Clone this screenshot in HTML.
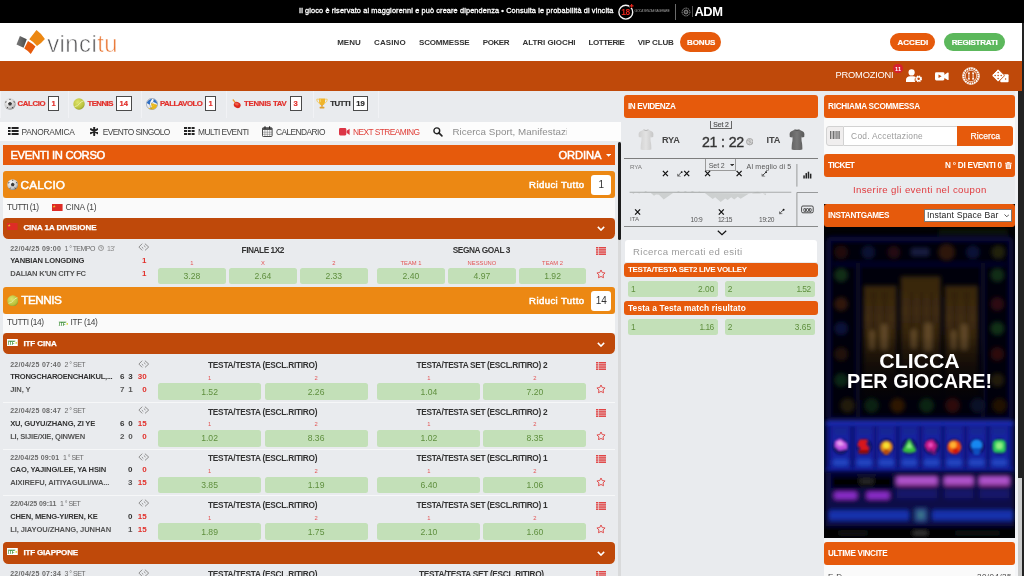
<!DOCTYPE html>
<html lang="it"><head>
<meta charset="utf-8">
<title>vincitu - Scommesse Live</title>
<style>
*{box-sizing:border-box;margin:0;padding:0}
html,body{width:1024px;height:576px;overflow:hidden;background:#e9ebee}
body{font-family:"Liberation Sans",sans-serif;position:relative;color:#333}
#pg{position:absolute;left:0;top:0;width:1024px;height:576px;overflow:hidden;background:#e9ebee;will-change:transform}
.a{position:absolute}
.t{position:absolute;white-space:nowrap;line-height:1.15}
.b{font-weight:bold}
.w{color:#fff}
.hdr{position:absolute;background:#e65a0c;border-radius:3px}
.sp{position:absolute;left:3px;width:612px;height:27px;background:#ec8813;border-radius:3px 3px 3px 3px}
.lg{position:absolute;left:3px;width:612px;background:#bf490a;border-radius:0 0 5px 5px}
.od{position:absolute;background:#c3e0b8;border-radius:2px;height:17px}
.wr{position:absolute;left:3px;width:612px;background:#fafafa}
.sep{position:absolute;left:3px;width:612px;height:1px;background:#f6f7f8}
.red{color:#e2302b}
#tabs .t.b{-webkit-text-stroke:.2px currentColor}
.gr{color:#5f8f3e}
.dk{color:#333}
</style>
</head>
<body>
<div id="pg">

<!-- ===== top black bar ===== -->
<div class="a" id="topbar" style="left:0;top:0;width:1024px;height:23px;background:#000">
<span class="t w" style="left: 299px; font-size: 7.3px; -webkit-text-stroke: 0.3px rgb(255, 255, 255); letter-spacing: 0.14px; top: 7.3px;">Il gioco è riservato ai maggiorenni e può creare dipendenza • Consulta le probabilità di vincita</span>
<svg class="a" style="left:617px;top:2.500px" width="20" height="19" viewBox="0 0 20 19"><circle cx="8.800" cy="9.200" r="6.900" fill="none" stroke="#f4f4f4" stroke-width="1.400"></circle><path d="M12.400 2.800h4.400M14.600 .6v4.400" stroke="#000" stroke-width="3.200"></path><path d="M12.700 2.800h3.800M14.600 .9v3.800" stroke="#e2231a" stroke-width="1.200"></path><text x="8.600" y="12.300" font-family="Liberation Sans, sans-serif" font-weight="bold" font-size="8.400" fill="#e2231a" text-anchor="middle" letter-spacing="-.3">18</text></svg>
<span class="t" style="left: 634.5px; font-size: 3px; color: rgb(154, 154, 154); letter-spacing: -0.22px; top: 10px;">GIOCA SENZA ESAGERARE</span>
<div class="a" style="left:675.4px;top:3.7px;width:.8px;height:16px;background:#6a6a6a"></div>
<svg class="a" style="left:681px;top:7px" width="10" height="10" viewBox="0 0 10 10"><circle cx="5" cy="5" r="3.9" fill="none" stroke="#aaa" stroke-width=".9" stroke-dasharray="1.2 .6"></circle><circle cx="5" cy="5" r="1.9" fill="none" stroke="#bbb" stroke-width=".8"></circle><circle cx="5" cy="5" r=".7" fill="#999"></circle></svg>
<div class="a" style="left:691.8px;top:6px;width:.6px;height:11px;background:#555"></div>
<span class="t b w" style="left: 694.5px; font-size: 12.9px; letter-spacing: -0.45px; top: 5.1px;">ADM</span>
</div>

<!-- ===== white header ===== -->
<div class="a" id="head" style="left:0;top:23px;width:1021.5px;height:38px;background:#fff">
<svg class="a" style="left:15px;top:6px" width="32" height="27" viewBox="15 29 32 27">
<defs><linearGradient id="lgg" x1="0" x2="1"><stop offset="0" stop-color="#7a7a7a"></stop><stop offset="1" stop-color="#4a4a4a"></stop></linearGradient></defs>
<polygon points="16.5,44.6 19.9,36.1 26.75,39.25 23.6,47.75" fill="url(#lgg)"></polygon>
<path d="M29.25 39.25L36.5 30Q41.500 33.600 44.900 39Q41.500 43.200 37 45.900Q33.500 41.800 29.250 39.250z" fill="#ec8813"></path>
<path d="M24.25 48.600L28 40.900Q32.200 43.200 35.500 46.500L30.750 54Q28 50.800 24.250 48.600z" fill="#e65a0c"></path>
</svg>
<span class="t" style="left: 47.2px; font-size: 23.8px; color: rgb(88, 88, 90); -webkit-text-stroke: 0.6px rgb(255, 255, 255); letter-spacing: 0.48px; top: 6.6px;">vinci<span style="color:#e8732f">tu</span></span>
<span class="t b dk" style="left: 337.2px; font-size: 8px; letter-spacing: -0.02px; top: 14.9px;">MENU</span>
<span class="t b dk" style="left: 374px; font-size: 8px; letter-spacing: 0.1px; top: 14.9px;">CASINO</span>
<span class="t b dk" style="left: 419px; font-size: 8px; letter-spacing: -0.17px; top: 14.9px;">SCOMMESSE</span>
<span class="t b dk" style="left: 482.7px; font-size: 8px; letter-spacing: -0.39px; top: 14.9px;">POKER</span>
<span class="t b dk" style="left: 522.5px; font-size: 8px; letter-spacing: -0.05px; top: 14.9px;">ALTRI GIOCHI</span>
<span class="t b dk" style="left: 588.5px; font-size: 8px; letter-spacing: -0.45px; top: 14.9px;">LOTTERIE</span>
<span class="t b dk" style="left: 637.7px; font-size: 8px; letter-spacing: -0.15px; top: 14.9px;">VIP CLUB</span>
<div class="a" style="left:680.3px;top:9.4px;width:41.2px;height:19.6px;border-radius:10px;background:#e65a0c"></div>
<span class="t b w" style="left: 687px; font-size: 8px; -webkit-text-stroke: 0.2px rgb(255, 255, 255); letter-spacing: -0.12px; top: 14.9px;">BONUS</span>
<div class="a" style="left:890.4px;top:10.2px;width:44.6px;height:17.6px;border-radius:9px;background:#e65a0c"></div>
<span class="t b w" style="left: 897.5px; font-size: 8px; -webkit-text-stroke: 0.2px rgb(255, 255, 255); letter-spacing: 0.02px; top: 14.6px;">ACCEDI</span>
<div class="a" style="left:944.4px;top:10.2px;width:60.6px;height:17.6px;border-radius:9px;background:#5cb85c"></div>
<span class="t b w" style="left: 951.7px; font-size: 8px; -webkit-text-stroke: 0.2px rgb(255, 255, 255); letter-spacing: -0.21px; top: 14.6px;">REGISTRATI</span>
</div>

<!-- ===== orange nav ===== -->
<div class="a" id="onav" style="left:0;top:60.5px;width:1021.5px;height:30.5px;background:#bf490a">
<span class="t w" style="left: 835.6px; font-size: 9.3px; letter-spacing: -0.21px; top: 9.9px;">PROMOZIONI</span>
<div class="a" style="left:893.4px;top:3.6px;width:9.4px;height:9.4px;border-radius:5px;background:#d7202f"></div>
<span class="t b w" style="font-size: 5.6px; top: 5.2px; left: 895.1px;">11</span>
<svg class="a" style="left:906px;top:8.6px" width="17" height="14" viewBox="0 0 17 14"><circle cx="5.6" cy="3.4" r="3.1" fill="#fff"></circle><path d="M0 13v-2.2c0-2.3 1.9-3.6 4-3.6h3.2c1 0 1.9.3 2.6.9-.9.9-1.3 2.2-1.100 3.400.1.600.3 1.100.6 1.500z" fill="#fff"></path><circle cx="12.600" cy="9.800" r="2.500" fill="none" stroke="#fff" stroke-width="1.800" stroke-dasharray="1.300 .66"></circle><circle cx="12.600" cy="9.800" r="1.900" fill="none" stroke="#fff" stroke-width="1.200"></circle></svg>
<svg class="a" style="left:935px;top:11.800px" width="14" height="9" viewBox="0 0 14 9"><rect x="0" y=".2" width="9.400" height="8.200" rx="1.300" fill="#fff"></rect><path d="M9 2.900l3.700-2.300q.9-.4.900.6v6.200q0 1-.9.600L9 5.700z" fill="#fff"></path><path d="M3.500 2.500v3.600l3.100-1.800z" fill="#bf490a"></path></svg>
<svg class="a" style="left:962px;top:6.300px" width="18" height="18" viewBox="0 0 18 18"><circle cx="9" cy="9" r="7.500" fill="none" stroke="#fff" stroke-width="1.900" stroke-dasharray="1.600 .75"></circle><circle cx="9" cy="9" r="8.400" fill="none" stroke="#fff" stroke-width=".6"></circle><circle cx="9" cy="9" r="5.700" fill="none" stroke="#fff" stroke-width=".7"></circle><path d="M5.600 5.600h2.600L6.900 8.400zM5.600 12.400h2.600L6.900 9.600zM9.800 5.600h2.600l-1.300 2.800zM9.800 12.400h2.600l-1.300-2.800z" fill="#fff"></path><circle cx="6.900" cy="9" r=".8" fill="#fff"></circle><circle cx="11.100" cy="9" r=".8" fill="#fff"></circle></svg>
<svg class="a" style="left:992px;top:8.500px" width="17" height="14" viewBox="0 0 17 14"><rect x="8.200" y="5.200" width="8.400" height="8" rx="1" fill="#fff"></rect><path d="M.4 5.600L5.300.7c.5-.5 1.200-.5 1.700 0l4.900 4.900c.5.500.5 1.200 0 1.700L7 12.200c-.5.500-1.200.500-1.700 0L.4 7.300c-.5-.5-.5-1.200 0-1.700z" fill="#fff" stroke="#bf490a" stroke-width=".9"></path><g fill="#bf490a"><circle cx="6.150" cy="3.400" r=".75"></circle><circle cx="6.150" cy="6.450" r=".75"></circle><circle cx="6.150" cy="9.500" r=".75"></circle><circle cx="3.100" cy="6.450" r=".75"></circle><circle cx="9.200" cy="6.450" r=".75"></circle><circle cx="13.600" cy="10" r=".7"></circle></g></svg>
</div>

<!-- ===== sports tabs ===== -->
<div class="a" id="tabs" style="left:0;top:91px;width:621px;height:31px;background:#e9ebee">
<div class="a" style="left:0.0px;top:0;width:1px;height:27px;background:#f1f2f5"></div><div class="a" style="left:68.0px;top:0;width:1px;height:27px;background:#f1f2f5"></div><div class="a" style="left:141.2px;top:0;width:1px;height:27px;background:#f1f2f5"></div><div class="a" style="left:226.2px;top:0;width:1px;height:27px;background:#f1f2f5"></div><div class="a" style="left:312.6px;top:0;width:1px;height:27px;background:#f1f2f5"></div><div class="a" style="left:377.6px;top:0;width:1px;height:27px;background:#f1f2f5"></div>
<svg class="a" style="left:3.5px;top:7px" width="12" height="12" viewBox="0 0 12 12"><defs><radialGradient id="sb" cx=".4" cy=".35" r=".7"><stop offset="0" stop-color="#fff"></stop><stop offset=".7" stop-color="#c8c8c8"></stop><stop offset="1" stop-color="#777"></stop></radialGradient></defs><circle cx="6" cy="6" r="5.700" fill="url(#sb)"></circle><polygon points="6,3.800 8,5.300 7.200,7.600 4.800,7.600 4,5.300" fill="#3a3a3a"></polygon><path d="M1.200 4.200l1.300-.4M10.800 4.200l-1.200-.5M3 10.300l.8-1.200M9 10.300l-.8-1.200M6 .8v1.200" stroke="#444" stroke-width="1"></path></svg>
<span class="t b red" style="left: 17.5px; font-size: 7.8px; letter-spacing: -0.35px; top: 9.1px;">CALCIO</span>
<div class="a" style="left:48px;top:5px;width:11.4px;height:14.8px;background:#fff;border:1px solid #4a4a4a"></div>
<span class="t b" style="font-size: 7.6px; color: rgb(226, 48, 43); top: 9.1px; left: 51.6px;">1</span>
<svg class="a" style="left:73.300px;top:7px" width="12" height="12" viewBox="0 0 12 12"><defs><radialGradient id="tb" cx=".4" cy=".35" r=".75"><stop offset="0" stop-color="#dfe46a"></stop><stop offset=".7" stop-color="#b9c13c"></stop><stop offset="1" stop-color="#7f8a22"></stop></radialGradient></defs><circle cx="6" cy="6" r="5.700" fill="url(#tb)"></circle><path d="M1.500 8.600Q5 8.200 6.400 5.800T10.800 2.800" fill="none" stroke="#eef2b0" stroke-width=".8"></path></svg>
<span class="t b red" style="left: 87.5px; font-size: 7.8px; letter-spacing: -0.55px; top: 9.1px;">TENNIS</span>
<div class="a" style="left:116px;top:5px;width:15.7px;height:14.8px;background:#fff;border:1px solid #4a4a4a"></div>
<span class="t b" style="font-size: 7.6px; color: rgb(226, 48, 43); top: 9.1px; left: 119.6px;">14</span>
<svg class="a" style="left:146px;top:7px" width="12" height="12" viewBox="0 0 12 12"><defs><radialGradient id="vb" cx=".4" cy=".35" r=".75"><stop offset="0" stop-color="#fff"></stop><stop offset=".8" stop-color="#e4e4e4"></stop><stop offset="1" stop-color="#aaa"></stop></radialGradient></defs><circle cx="6" cy="6" r="5.600" fill="url(#vb)" stroke="#6f7f9a" stroke-width=".5"></circle><path d="M.7 4.800Q2.600 1.300 6.200 .8 4.200 3.300 3.900 6.800 2 6.300 .7 4.800z" fill="#2f6fc4"></path><path d="M7.600 .9Q10.900 2.300 11.400 6 9.600 4.300 7.100 4 7.700 2.400 7.600 .9z" fill="#2f6fc4"></path><path d="M2.300 10.200Q5.500 10 7.500 7.500T11.200 7.200Q10.500 10.400 7 11.400 4.300 11.500 2.300 10.200z" fill="#e8b820"></path><path d="M5 5.300Q7.300 5 9.200 6.600 7 7.800 6 9.500 5 7.500 5 5.300z" fill="#e8b820"></path><path d="M3.900 6.800Q4 9 5.500 10.800M7.100 4Q6 5 5 5.300" stroke="#3a5a9a" stroke-width=".4" fill="none"></path></svg>
<span class="t b red" style="left: 159.9px; font-size: 7.8px; letter-spacing: -0.5px; top: 9.1px;">PALLAVOLO</span>
<div class="a" style="left:205px;top:5px;width:11.0px;height:14.8px;background:#fff;border:1px solid #4a4a4a"></div>
<span class="t b" style="font-size: 7.6px; color: rgb(226, 48, 43); top: 9.1px; left: 208.4px;">1</span>
<svg class="a" style="left:232px;top:8px" width="9" height="10" viewBox="0 0 9 10"><path d="M.8.500l2.600 3.200" stroke="#e89a2a" stroke-width="1.200"></path><ellipse cx="5.200" cy="6" rx="3.500" ry="3" fill="#dd2a1e" transform="rotate(20 5.200 6)"></ellipse><ellipse cx="4.600" cy="5" rx="2.200" ry="1.200" fill="#f0604a" transform="rotate(20 4.600 5)"></ellipse></svg>
<span class="t b red" style="left: 244.1px; font-size: 7.8px; letter-spacing: -0.28px; top: 9.1px;">TENNIS TAV</span>
<div class="a" style="left:289.6px;top:5px;width:12.3px;height:14.8px;background:#fff;border:1px solid #4a4a4a"></div>
<span class="t b" style="font-size: 7.6px; color: rgb(226, 48, 43); top: 9.1px; left: 293.6px;">3</span>
<svg class="a" style="left:316px;top:7.400px" width="12" height="11" viewBox="0 0 12 11"><path d="M3 .5h6v3.500c0 2-1.300 3.300-3 3.300S3 6 3 4z" fill="#f0b429"></path><path d="M3 1.200H.8c0 2.300 1 3.500 2.600 3.700M9 1.200h2.200c0 2.300-1 3.500-2.600 3.700" fill="none" stroke="#f3c95a" stroke-width=".9"></path><rect x="5.300" y="7" width="1.400" height="1.800" fill="#d9962a"></rect><rect x="3.600" y="8.700" width="4.800" height="1.800" rx=".4" fill="#e0a030"></rect><path d="M4.200 1.200v3" stroke="#fbe08a" stroke-width=".8"></path></svg>
<span class="t b dk" style="left: 330.2px; font-size: 7.8px; letter-spacing: -0.42px; top: 9.1px;">TUTTI</span>
<div class="a" style="left:353.1px;top:5px;width:14.8px;height:14.8px;background:#fff;border:1px solid #4a4a4a"></div>
<span class="t b" style="font-size: 7.6px; color: rgb(43, 43, 43); top: 9.1px; left: 356.3px;">19</span>
</div>

<!-- ===== view menu ===== -->
<div class="a" id="vmenu" style="left:0;top:121.5px;width:621px;height:19.5px;background:#fafafa">
<svg class="a" style="left:8px;top:5.500px" width="11" height="8" viewBox="0 0 11 8"><g fill="#222"><rect x="0" y="0" width="2.600" height="2"></rect><rect x="3.600" y="0" width="7" height="2"></rect><rect x="0" y="3" width="2.600" height="2"></rect><rect x="3.600" y="3" width="7" height="2"></rect><rect x="0" y="6" width="2.600" height="2"></rect><rect x="3.600" y="6" width="7" height="2"></rect></g></svg>
<span class="t" style="left: 21.5px; font-size: 8.4px; color: rgb(68, 68, 68); letter-spacing: -0.27px; top: 6.4px;">PANORAMICA</span>
<svg class="a" style="left:89.700px;top:5.700px" width="8.400" height="8.400" viewBox="0 0 9 9"><path d="M4.500 .2v8.600M.8 2.350l7.400 4.300M.8 6.650l7.400-4.300" stroke="#222" stroke-width="2.100" stroke-linecap="round"></path></svg>
<span class="t" style="left: 102.7px; font-size: 8.4px; color: rgb(68, 68, 68); letter-spacing: -0.55px; top: 6.4px;">EVENTO SINGOLO</span>
<svg class="a" style="left:183.900px;top:5.500px" width="11" height="8" viewBox="0 0 11 8"><g fill="#222"><rect x="0" y="0" width="3" height="2"></rect><rect x="3.800" y="0" width="3" height="2"></rect><rect x="7.600" y="0" width="3" height="2"></rect><rect x="0" y="3" width="3" height="2"></rect><rect x="3.800" y="3" width="3" height="2"></rect><rect x="7.600" y="3" width="3" height="2"></rect><rect x="0" y="6" width="3" height="2"></rect><rect x="3.800" y="6" width="3" height="2"></rect><rect x="7.600" y="6" width="3" height="2"></rect></g></svg>
<span class="t" style="left: 198px; font-size: 8.4px; color: rgb(68, 68, 68); letter-spacing: -0.55px; top: 6.4px;">MULTI EVENTI</span>
<svg class="a" style="left:262px;top:4.300px" width="11" height="11" viewBox="0 0 11 11"><rect x=".5" y="1.800" width="9.600" height="8.700" rx=".8" fill="#fff" stroke="#333" stroke-width=".9"></rect><rect x=".5" y="1.800" width="9.600" height="2.200" fill="#555"></rect><path d="M3 .3v2.400M7.600 .3v2.400" stroke="#222" stroke-width="1.100"></path><path d="M.6 6.200h9.400M.6 8.300h9.400M2.900 4v6.400M5.300 4v6.400M7.700 4v6.400" stroke="#666" stroke-width=".5"></path></svg>
<span class="t" style="left: 275.9px; font-size: 8.4px; color: rgb(68, 68, 68); letter-spacing: -0.55px; top: 6.4px;">CALENDARIO</span>
<svg class="a" style="left:339.400px;top:6.200px" width="11" height="8" viewBox="0 0 11 8"><rect x="0" y=".1" width="7.300" height="7.300" rx="1.300" fill="#dc3545"></rect><path d="M7.600 2.800l3-2.100v6.200l-3-2.100z" fill="#dc3545"></path></svg>
<span class="t" style="left: 352.9px; font-size: 8.4px; color: rgb(224, 64, 58); letter-spacing: -0.55px; top: 6.4px;">NEXT STREAMING</span>
<svg class="a" style="left:433px;top:5.800px" width="10" height="10" viewBox="0 0 10 10"><circle cx="3.800" cy="3.800" r="2.900" fill="none" stroke="#222" stroke-width="1.400"></circle><path d="M5.900 5.900l3 3" stroke="#222" stroke-width="1.600" stroke-linecap="round"></path></svg>
<div class="a" style="left:450px;top:0;width:171px;height:19.500px;background:#fdfdfd"></div>
<div class="a" style="left:450px;top:0;width:117px;height:19.500px;overflow:hidden"><span class="t" style="left: 2.5px; font-size: 9.8px; color: rgb(142, 142, 142); letter-spacing: 0.05px; top: 4px;">Ricerca Sport, Manifestazione</span></div>
</div>

<!-- ===== main list ===== -->
<div id="main">
<div class="hdr" style="left:3px;top:144.800px;width:611.800px;height:20px;border-radius:0"></div>
<span class="t w" style="font-size: 11.2px; left: 10.4px; -webkit-text-stroke: 0.5px rgb(255, 255, 255); letter-spacing: -0.28px; top: 148.5px;">EVENTI IN CORSO</span>
<span class="t w" style="font-size: 11.2px; left: 558.5px; -webkit-text-stroke: 0.5px rgb(255, 255, 255); letter-spacing: -0.12px; top: 148.5px;">ORDINA</span>
<svg class="a" style="left:606px;top:154.300px" width="5.200" height="2.800" viewBox="0 0 5.2 2.8"><path d="M0 0h5.200L2.600 2.800z" fill="#fff"></path></svg>
<div class="sp" style="top:171.2px;height:26.600px"></div>
<svg class="a" style="left:6.9px;top:178.79999999999998px" width="11.4" height="11.4" viewBox="0 0 12 12"><circle cx="6" cy="6" r="5.700" fill="url(#sb)"></circle><polygon points="6,3.800 8,5.300 7.200,7.600 4.800,7.600 4,5.300" fill="#3a3a3a"></polygon><path d="M1.200 4.200l1.300-.4M10.800 4.200l-1.200-.5M3 10.300l.8-1.200M9 10.300l-.8-1.200M6 .8v1.200" stroke="#444" stroke-width="1"></path></svg>
<span class="t w" style="font-size: 11.8px; left: 20.6px; -webkit-text-stroke: 0.5px rgb(255, 255, 255); letter-spacing: 0.08px; top: 178.5px;">CALCIO</span>
<span class="t w" style="font-size: 9.6px; left: 529.1px; -webkit-text-stroke: 0.5px rgb(255, 255, 255); letter-spacing: 0.39px; top: 179.3px;">Riduci Tutto</span>
<div class="a" style="left:591.200px;top:175.2px;width:20px;height:19.500px;border-radius:3px;background:#fff"></div>
<span class="t dk" style="font-size: 10px; top: 179.3px; left: 598.5px;">1</span>
<div class="wr" style="top:197.800px;height:20px"></div>
<span class="t " style="font-size: 8.4px; left: 7.1px; color: rgb(68, 68, 68); letter-spacing: -0.55px; top: 202.8px;">TUTTI (1)</span>
<svg class="a" style="left:52.2px;top:204.1px" width="10.6" height="7.2" viewBox="0 0 10.6 7.2"><rect width="10.6" height="7.2" fill="#de2c26"></rect><polygon points="2.2,.9 2.600,2 3.700,2 2.800,2.700 3.150,3.800 2.200,3.100 1.250,3.800 1.600,2.700 .7,2 1.800,2" fill="#f2c230"></polygon></svg>
<span class="t " style="font-size: 8.4px; left: 65.6px; color: rgb(68, 68, 68); letter-spacing: -0.16px; top: 202.8px;">CINA (1)</span>
<div class="lg" style="top:217.7px;height:21.2px;border-radius:3.500px 4px 5.500px 5.500px"></div>
<svg class="a" style="left:7.1px;top:223.3px" width="10.6" height="7.2" viewBox="0 0 10.6 7.2"><rect width="10.6" height="7.2" fill="#de2c26"></rect><polygon points="2.2,.9 2.600,2 3.700,2 2.800,2.700 3.150,3.800 2.200,3.100 1.250,3.800 1.600,2.700 .7,2 1.800,2" fill="#f2c230"></polygon></svg>
<span class="t b w" style="font-size: 8px; left: 23.4px; -webkit-text-stroke: 0.25px rgb(255, 255, 255); letter-spacing: -0.06px; top: 223.3px;">CINA 1A DIVISIONE</span>
<svg class="a" style="left:596.600px;top:226.2px" width="8" height="5.200" viewBox="0 0 8 5.2"><path d="M.8 .9l3.200 3.200L7.200 .9" fill="none" stroke="#fff" stroke-width="1.500"></path></svg>
<span class="t " style="font-size: 7px; left: 10.2px; color: rgb(106, 106, 106); font-weight: 600; letter-spacing: 0.28px; top: 244.5px;">22/04/25 09:00</span>
<span class="t " style="font-size: 7px; left: 64.4px; color: rgb(106, 106, 106); letter-spacing: -0.55px; top: 244.5px;">1 ° TEMPO</span>
<svg class="a" style="left:98px;top:245.400px" width="6" height="6" viewBox="0 0 6 6"><circle cx="3" cy="3" r="2.500" fill="none" stroke="#777" stroke-width=".7"></circle><path d="M3 1.400v1.700h1.200" fill="none" stroke="#777" stroke-width=".6"></path></svg>
<span class="t " style="font-size: 7px; left: 106.9px; color: rgb(138, 138, 138); letter-spacing: -0.55px; top: 244.5px;">13'</span>
<svg class="a" style="left:138px;top:243.4px" width="11.500" height="8" viewBox="138 243.400 11.500 8"><path d="M142.200 244.100L138.900 247.450l3.300 3.350M144.900 244.100l3.800 3.350-3.700 3.350M141.800 247.500l1.500 1.400M143.900 246l1.600 1.400" fill="none" stroke="#8e8e8e" stroke-width="1"></path></svg>
<span class="t b" style="font-size: 7.6px; left: 10.2px; color: rgb(51, 51, 51); letter-spacing: -0.18px; top: 257.1px;">YANBIAN LONGDING</span>
<span class="t b" style="font-size: 7.6px; left: 10.2px; color: rgb(85, 85, 85); letter-spacing: -0.26px; top: 269.6px;">DALIAN K'UN CITY FC</span>
<span class="t b red" style="font-size: 8px; top: 256px; left: 142.1px;">1</span>
<span class="t b red" style="font-size: 8px; top: 269.2px; left: 142.1px;">1</span>
<span class="t b dk" style="font-size: 8.3px; letter-spacing: -0.47px; top: 245.7px; left: 241.6px;">FINALE 1X2</span>
<span class="t b dk" style="font-size: 8.3px; letter-spacing: -0.41px; top: 245.7px; left: 452.7px;">SEGNA GOAL 3</span>
<div class="od" style="left:158.1px;top:267.6px;width:67.6px;height:16.600px;border-radius:2.500px"></div>
<span class="t gr" style="font-size: 8.6px; top: 271.8px; left: 183.5px;">3.28</span>
<span class="t " style="font-size: 5.8px; color: rgb(227, 84, 84); top: 259.5px; left: 190.3px;">1</span>
<div class="od" style="left:229.1px;top:267.6px;width:67.6px;height:16.600px;border-radius:2.500px"></div>
<span class="t gr" style="font-size: 8.6px; top: 271.8px; left: 254.5px;">2.64</span>
<span class="t " style="font-size: 5.8px; color: rgb(227, 84, 84); top: 259.5px; left: 261px;">X</span>
<div class="od" style="left:300px;top:267.6px;width:67.6px;height:16.600px;border-radius:2.500px"></div>
<span class="t gr" style="font-size: 8.6px; top: 271.8px; left: 325.4px;">2.33</span>
<span class="t " style="font-size: 5.8px; color: rgb(227, 84, 84); top: 259.5px; left: 332.2px;">2</span>
<div class="od" style="left:377.2px;top:267.6px;width:67.6px;height:16.600px;border-radius:2.500px"></div>
<span class="t gr" style="font-size: 8.6px; top: 271.8px; left: 402.6px;">2.40</span>
<span class="t " style="font-size: 5.8px; color: rgb(227, 84, 84); top: 259.5px; left: 400.5px;">TEAM 1</span>
<div class="od" style="left:448.1px;top:267.6px;width:67.6px;height:16.600px;border-radius:2.500px"></div>
<span class="t gr" style="font-size: 8.6px; top: 271.8px; left: 473.5px;">4.97</span>
<span class="t " style="font-size: 5.8px; color: rgb(227, 84, 84); top: 259.5px; left: 467.6px;">NESSUNO</span>
<div class="od" style="left:518.8px;top:267.6px;width:67.6px;height:16.600px;border-radius:2.500px"></div>
<span class="t gr" style="font-size: 8.6px; top: 271.8px; left: 544.2px;">1.92</span>
<span class="t " style="font-size: 5.8px; color: rgb(227, 84, 84); top: 259.5px; left: 542.1px;">TEAM 2</span>
<svg class="a" style="left:596px;top:247px" width="10" height="8" viewBox="0 0 10 8"><g fill="#e04545"><rect x="0" y="0" width="2" height="1.500"></rect><rect x="2.600" y="0" width="7.400" height="1.500"></rect><rect x="0" y="2.150" width="2" height="1.500"></rect><rect x="2.600" y="2.150" width="7.400" height="1.500"></rect><rect x="0" y="4.300" width="2" height="1.500"></rect><rect x="2.600" y="4.300" width="7.400" height="1.500"></rect><rect x="0" y="6.450" width="2" height="1.500"></rect><rect x="2.600" y="6.450" width="7.400" height="1.500"></rect></g></svg>
<svg class="a" style="left:596px;top:269px" width="10" height="9.600" viewBox="0 0 9.2 8.8"><path d="M4.600 .9l1.150 2.350 2.600.38-1.880 1.830.44 2.590L4.600 6.830 2.290 8.050l.44-2.590L.85 3.630l2.600-.38z" fill="none" stroke="#e04545" stroke-width=".85" stroke-linejoin="round"></path></svg>
<div class="sp" style="top:287.1px;height:26.600px"></div>
<svg class="a" style="left:6.9px;top:294.70000000000005px" width="11.6" height="11.6" viewBox="0 0 12 12"><circle cx="6" cy="6" r="5.700" fill="url(#tb)"></circle><path d="M1.500 8.600Q5 8.200 6.400 5.800T10.800 2.800" fill="none" stroke="#eef2b0" stroke-width=".8"></path></svg>
<span class="t w" style="font-size: 11.8px; left: 21.3px; -webkit-text-stroke: 0.5px rgb(255, 255, 255); letter-spacing: -0.55px; top: 294.4px;">TENNIS</span>
<span class="t w" style="font-size: 9.6px; left: 529.1px; -webkit-text-stroke: 0.5px rgb(255, 255, 255); letter-spacing: 0.39px; top: 295.2px;">Riduci Tutto</span>
<div class="a" style="left:591.200px;top:291.1px;width:20px;height:19.500px;border-radius:3px;background:#fff"></div>
<span class="t dk" style="font-size: 10px; top: 295.3px; left: 595.7px;">14</span>
<div class="wr" style="top:313.700px;height:19.500px"></div>
<span class="t " style="font-size: 8.4px; left: 7.1px; color: rgb(68, 68, 68); letter-spacing: -0.44px; top: 318px;">TUTTI (14)</span>
<svg class="a" style="left:57.7px;top:319.6px" width="10.8" height="7.400" viewBox="0 0 10.8 7.4"><rect width="10.8" height="7.400" fill="#fafafa"></rect><rect x=".8" y="1.500" width="7.600" height="1" fill="#8fbf8a"></rect><text x=".7" y="6.300" font-family="Liberation Sans, sans-serif" font-weight="bold" font-style="italic" font-size="4.600" fill="#3f8f3a">ITF</text><circle cx="9.300" cy="3.900" r=".9" fill="#d8d838"></circle></svg>
<span class="t " style="font-size: 8.4px; left: 70.6px; color: rgb(68, 68, 68); letter-spacing: -0.37px; top: 318px;">ITF (14)</span>
<div class="lg" style="top:333.1px;height:21.2px;border-radius:3.500px 4px 5.500px 5.500px"></div>
<svg class="a" style="left:7.1px;top:338.6px" width="10.8" height="7.400" viewBox="0 0 10.8 7.4"><rect width="10.8" height="7.400" fill="#fff"></rect><rect x=".8" y="1.500" width="7.600" height="1" fill="#8fbf8a"></rect><text x=".7" y="6.300" font-family="Liberation Sans, sans-serif" font-weight="bold" font-style="italic" font-size="4.600" fill="#3f8f3a">ITF</text><circle cx="9.300" cy="3.900" r=".9" fill="#d8d838"></circle></svg>
<span class="t b w" style="font-size: 8px; left: 23.4px; -webkit-text-stroke: 0.25px rgb(255, 255, 255); letter-spacing: -0.07px; top: 338.7px;">ITF CINA</span>
<svg class="a" style="left:596.600px;top:341.6px" width="8" height="5.200" viewBox="0 0 8 5.2"><path d="M.8 .9l3.200 3.200L7.200 .9" fill="none" stroke="#fff" stroke-width="1.500"></path></svg>
<span class="t " style="font-size: 7px; left: 10.2px; color: rgb(106, 106, 106); font-weight: 600; letter-spacing: 0.28px; top: 360.5px;">22/04/25 07:40</span>
<span class="t " style="font-size: 7px; left: 64.4px; color: rgb(106, 106, 106); letter-spacing: -0.49px; top: 360.5px;">2 ° SET</span>
<svg class="a" style="left:138px;top:359.5px" width="11.500" height="8" viewBox="138 243.400 11.500 8"><path d="M142.200 244.100L138.900 247.450l3.300 3.350M144.900 244.100l3.800 3.350-3.700 3.350M141.800 247.500l1.500 1.400M143.900 246l1.600 1.400" fill="none" stroke="#8e8e8e" stroke-width="1"></path></svg>
<span class="t b dk" style="font-size: 8.3px; letter-spacing: -0.25px; top: 360.9px; left: 208px;">TESTA/TESTA (ESCL.RITIRO)</span>
<span class="t b dk" style="font-size: 8.3px; letter-spacing: -0.33px; top: 360.9px; left: 416.5px;">TESTA/TESTA SET (ESCL.RITIRO) 2</span>
<svg class="a" style="left:596px;top:361.9px" width="10" height="8" viewBox="0 0 10 8"><g fill="#e04545"><rect x="0" y="0" width="2" height="1.500"></rect><rect x="2.600" y="0" width="7.400" height="1.500"></rect><rect x="0" y="2.150" width="2" height="1.500"></rect><rect x="2.600" y="2.150" width="7.400" height="1.500"></rect><rect x="0" y="4.300" width="2" height="1.500"></rect><rect x="2.600" y="4.300" width="7.400" height="1.500"></rect><rect x="0" y="6.450" width="2" height="1.500"></rect><rect x="2.600" y="6.450" width="7.400" height="1.500"></rect></g></svg>
<span class="t b" style="font-size: 7.6px; left: 10.2px; color: rgb(51, 51, 51); letter-spacing: -0.27px; top: 373.1px;">TRONGCHAROENCHAIKUL,...</span>
<span class="t b" style="font-size: 7.6px; left: 10.2px; color: rgb(85, 85, 85); letter-spacing: -0.11px; top: 386px;">JIN, Y</span>
<span class="t b" style="font-size: 8px; color: rgb(51, 51, 51); word-spacing: 1.5px; top: 372px; left: 120px;">6 3</span>
<span class="t b" style="font-size: 8px; color: rgb(85, 85, 85); word-spacing: 1.5px; top: 385.1px; left: 120px;">7 1</span>
<span class="t b red" style="font-size: 8px; top: 372px; left: 137.8px;">30</span>
<span class="t b red" style="font-size: 8px; top: 385.1px; left: 142.2px;">0</span>
<div class="od" style="left:158px;top:383.4px;width:103.1px;height:16.600px;border-radius:2.500px"></div>
<span class="t gr" style="font-size: 8.6px; top: 387.6px; left: 201.2px;">1.52</span>
<span class="t " style="font-size: 5.8px; color: rgb(227, 84, 84); top: 374.6px; left: 207.9px;">1</span>
<div class="od" style="left:264.5px;top:383.4px;width:103.1px;height:16.600px;border-radius:2.500px"></div>
<span class="t gr" style="font-size: 8.6px; top: 387.6px; left: 307.7px;">2.26</span>
<span class="t " style="font-size: 5.8px; color: rgb(227, 84, 84); top: 374.6px; left: 314.4px;">2</span>
<div class="od" style="left:377.3px;top:383.4px;width:103.1px;height:16.600px;border-radius:2.500px"></div>
<span class="t gr" style="font-size: 8.6px; top: 387.6px; left: 420.5px;">1.04</span>
<span class="t " style="font-size: 5.8px; color: rgb(227, 84, 84); top: 374.6px; left: 427.2px;">1</span>
<div class="od" style="left:483.3px;top:383.4px;width:103.1px;height:16.600px;border-radius:2.500px"></div>
<span class="t gr" style="font-size: 8.6px; top: 387.6px; left: 526.5px;">7.20</span>
<span class="t " style="font-size: 5.8px; color: rgb(227, 84, 84); top: 374.6px; left: 533.2px;">2</span>
<svg class="a" style="left:596px;top:384.1px" width="10" height="9.600" viewBox="0 0 9.2 8.8"><path d="M4.600 .9l1.150 2.350 2.600.38-1.880 1.830.44 2.590L4.600 6.830 2.290 8.050l.44-2.590L.85 3.630l2.600-.38z" fill="none" stroke="#e04545" stroke-width=".85" stroke-linejoin="round"></path></svg>
<div class="sep" style="top:401.9px"></div>
<span class="t " style="font-size: 7px; left: 10.2px; color: rgb(106, 106, 106); font-weight: 600; letter-spacing: 0.28px; top: 407.1px;">22/04/25 08:47</span>
<span class="t " style="font-size: 7px; left: 64.4px; color: rgb(106, 106, 106); letter-spacing: -0.49px; top: 407.1px;">2 ° SET</span>
<svg class="a" style="left:138px;top:406.13px" width="11.500" height="8" viewBox="138 243.400 11.500 8"><path d="M142.200 244.100L138.900 247.450l3.300 3.350M144.900 244.100l3.800 3.350-3.700 3.350M141.800 247.500l1.500 1.400M143.900 246l1.600 1.400" fill="none" stroke="#8e8e8e" stroke-width="1"></path></svg>
<span class="t b dk" style="font-size: 8.3px; letter-spacing: -0.25px; top: 407.6px; left: 208px;">TESTA/TESTA (ESCL.RITIRO)</span>
<span class="t b dk" style="font-size: 8.3px; letter-spacing: -0.33px; top: 407.6px; left: 416.5px;">TESTA/TESTA SET (ESCL.RITIRO) 2</span>
<svg class="a" style="left:596px;top:408.53px" width="10" height="8" viewBox="0 0 10 8"><g fill="#e04545"><rect x="0" y="0" width="2" height="1.500"></rect><rect x="2.600" y="0" width="7.400" height="1.500"></rect><rect x="0" y="2.150" width="2" height="1.500"></rect><rect x="2.600" y="2.150" width="7.400" height="1.500"></rect><rect x="0" y="4.300" width="2" height="1.500"></rect><rect x="2.600" y="4.300" width="7.400" height="1.500"></rect><rect x="0" y="6.450" width="2" height="1.500"></rect><rect x="2.600" y="6.450" width="7.400" height="1.500"></rect></g></svg>
<span class="t b" style="font-size: 7.6px; left: 10.2px; color: rgb(51, 51, 51); letter-spacing: -0.19px; top: 419.8px;">XU, GUYU/ZHANG, ZI YE</span>
<span class="t b" style="font-size: 7.6px; left: 10.2px; color: rgb(85, 85, 85); letter-spacing: -0.22px; top: 432.7px;">LI, SIJIE/XIE, QINWEN</span>
<span class="t b" style="font-size: 8px; color: rgb(51, 51, 51); word-spacing: 1.5px; top: 418.6px; left: 120px;">6 0</span>
<span class="t b" style="font-size: 8px; color: rgb(85, 85, 85); word-spacing: 1.5px; top: 431.7px; left: 120px;">2 0</span>
<span class="t b red" style="font-size: 8px; top: 418.6px; left: 137.8px;">15</span>
<span class="t b red" style="font-size: 8px; top: 431.7px; left: 142.2px;">0</span>
<div class="od" style="left:158px;top:430.03px;width:103.1px;height:16.600px;border-radius:2.500px"></div>
<span class="t gr" style="font-size: 8.6px; top: 434.2px; left: 201.2px;">1.02</span>
<span class="t " style="font-size: 5.8px; color: rgb(227, 84, 84); top: 421.2px; left: 207.9px;">1</span>
<div class="od" style="left:264.5px;top:430.03px;width:103.1px;height:16.600px;border-radius:2.500px"></div>
<span class="t gr" style="font-size: 8.6px; top: 434.2px; left: 307.7px;">8.36</span>
<span class="t " style="font-size: 5.8px; color: rgb(227, 84, 84); top: 421.2px; left: 314.4px;">2</span>
<div class="od" style="left:377.3px;top:430.03px;width:103.1px;height:16.600px;border-radius:2.500px"></div>
<span class="t gr" style="font-size: 8.6px; top: 434.2px; left: 420.5px;">1.02</span>
<span class="t " style="font-size: 5.8px; color: rgb(227, 84, 84); top: 421.2px; left: 427.2px;">1</span>
<div class="od" style="left:483.3px;top:430.03px;width:103.1px;height:16.600px;border-radius:2.500px"></div>
<span class="t gr" style="font-size: 8.6px; top: 434.2px; left: 526.5px;">8.35</span>
<span class="t " style="font-size: 5.8px; color: rgb(227, 84, 84); top: 421.2px; left: 533.2px;">2</span>
<svg class="a" style="left:596px;top:430.73px" width="10" height="9.600" viewBox="0 0 9.2 8.8"><path d="M4.600 .9l1.150 2.350 2.600.38-1.880 1.830.44 2.590L4.600 6.830 2.290 8.050l.44-2.590L.85 3.630l2.600-.38z" fill="none" stroke="#e04545" stroke-width=".85" stroke-linejoin="round"></path></svg>
<div class="sep" style="top:448.5px"></div>
<span class="t " style="font-size: 7px; left: 10.2px; color: rgb(106, 106, 106); font-weight: 600; letter-spacing: 0.15px; top: 453.7px;">22/04/25 09:01</span>
<span class="t " style="font-size: 7px; left: 63px; color: rgb(106, 106, 106); letter-spacing: -0.55px; top: 453.7px;">1 ° SET</span>
<svg class="a" style="left:138px;top:452.76px" width="11.500" height="8" viewBox="138 243.400 11.500 8"><path d="M142.200 244.100L138.900 247.450l3.300 3.350M144.900 244.100l3.800 3.350-3.700 3.350M141.800 247.500l1.500 1.400M143.900 246l1.600 1.400" fill="none" stroke="#8e8e8e" stroke-width="1"></path></svg>
<span class="t b dk" style="font-size: 8.3px; letter-spacing: -0.25px; top: 454.2px; left: 208px;">TESTA/TESTA (ESCL.RITIRO)</span>
<span class="t b dk" style="font-size: 8.3px; letter-spacing: -0.33px; top: 454.2px; left: 416.5px;">TESTA/TESTA SET (ESCL.RITIRO) 1</span>
<svg class="a" style="left:596px;top:455.15999999999997px" width="10" height="8" viewBox="0 0 10 8"><g fill="#e04545"><rect x="0" y="0" width="2" height="1.500"></rect><rect x="2.600" y="0" width="7.400" height="1.500"></rect><rect x="0" y="2.150" width="2" height="1.500"></rect><rect x="2.600" y="2.150" width="7.400" height="1.500"></rect><rect x="0" y="4.300" width="2" height="1.500"></rect><rect x="2.600" y="4.300" width="7.400" height="1.500"></rect><rect x="0" y="6.450" width="2" height="1.500"></rect><rect x="2.600" y="6.450" width="7.400" height="1.500"></rect></g></svg>
<span class="t b" style="font-size: 7.6px; left: 10.2px; color: rgb(51, 51, 51); letter-spacing: -0.14px; top: 466.4px;">CAO, YAJING/LEE, YA HSIN</span>
<span class="t b" style="font-size: 7.6px; left: 10.2px; color: rgb(85, 85, 85); letter-spacing: -0.13px; top: 479.3px;">AIXIREFU, AITIYAGULI/WA...</span>
<span class="t b" style="font-size: 8px; color: rgb(51, 51, 51); word-spacing: 1.5px; top: 465.3px; left: 128.1px;">0</span>
<span class="t b" style="font-size: 8px; color: rgb(85, 85, 85); word-spacing: 1.5px; top: 478.4px; left: 128.1px;">3</span>
<span class="t b red" style="font-size: 8px; top: 465.3px; left: 142.2px;">0</span>
<span class="t b red" style="font-size: 8px; top: 478.4px; left: 137.8px;">15</span>
<div class="od" style="left:158px;top:476.65999999999997px;width:103.1px;height:16.600px;border-radius:2.500px"></div>
<span class="t gr" style="font-size: 8.6px; top: 480.8px; left: 201.2px;">3.85</span>
<span class="t " style="font-size: 5.8px; color: rgb(227, 84, 84); top: 467.8px; left: 207.9px;">1</span>
<div class="od" style="left:264.5px;top:476.65999999999997px;width:103.1px;height:16.600px;border-radius:2.500px"></div>
<span class="t gr" style="font-size: 8.6px; top: 480.8px; left: 307.7px;">1.19</span>
<span class="t " style="font-size: 5.8px; color: rgb(227, 84, 84); top: 467.8px; left: 314.4px;">2</span>
<div class="od" style="left:377.3px;top:476.65999999999997px;width:103.1px;height:16.600px;border-radius:2.500px"></div>
<span class="t gr" style="font-size: 8.6px; top: 480.8px; left: 420.5px;">6.40</span>
<span class="t " style="font-size: 5.8px; color: rgb(227, 84, 84); top: 467.8px; left: 427.2px;">1</span>
<div class="od" style="left:483.3px;top:476.65999999999997px;width:103.1px;height:16.600px;border-radius:2.500px"></div>
<span class="t gr" style="font-size: 8.6px; top: 480.8px; left: 526.5px;">1.06</span>
<span class="t " style="font-size: 5.8px; color: rgb(227, 84, 84); top: 467.8px; left: 533.2px;">2</span>
<svg class="a" style="left:596px;top:477.36px" width="10" height="9.600" viewBox="0 0 9.2 8.8"><path d="M4.600 .9l1.150 2.350 2.600.38-1.880 1.830.44 2.590L4.600 6.830 2.290 8.050l.44-2.590L.85 3.630l2.600-.38z" fill="none" stroke="#e04545" stroke-width=".85" stroke-linejoin="round"></path></svg>
<div class="sep" style="top:495.2px"></div>
<span class="t " style="font-size: 7px; left: 10.2px; color: rgb(106, 106, 106); font-weight: 600; letter-spacing: -0.04px; top: 500.4px;">22/04/25 09:11</span>
<span class="t " style="font-size: 7px; left: 60px; color: rgb(106, 106, 106); letter-spacing: -0.55px; top: 500.4px;">1 ° SET</span>
<svg class="a" style="left:138px;top:499.39px" width="11.500" height="8" viewBox="138 243.400 11.500 8"><path d="M142.200 244.100L138.900 247.450l3.300 3.350M144.900 244.100l3.800 3.350-3.700 3.350M141.800 247.500l1.500 1.400M143.900 246l1.600 1.400" fill="none" stroke="#8e8e8e" stroke-width="1"></path></svg>
<span class="t b dk" style="font-size: 8.3px; letter-spacing: -0.25px; top: 500.8px; left: 208px;">TESTA/TESTA (ESCL.RITIRO)</span>
<span class="t b dk" style="font-size: 8.3px; letter-spacing: -0.33px; top: 500.8px; left: 416.5px;">TESTA/TESTA SET (ESCL.RITIRO) 1</span>
<svg class="a" style="left:596px;top:501.78999999999996px" width="10" height="8" viewBox="0 0 10 8"><g fill="#e04545"><rect x="0" y="0" width="2" height="1.500"></rect><rect x="2.600" y="0" width="7.400" height="1.500"></rect><rect x="0" y="2.150" width="2" height="1.500"></rect><rect x="2.600" y="2.150" width="7.400" height="1.500"></rect><rect x="0" y="4.300" width="2" height="1.500"></rect><rect x="2.600" y="4.300" width="7.400" height="1.500"></rect><rect x="0" y="6.450" width="2" height="1.500"></rect><rect x="2.600" y="6.450" width="7.400" height="1.500"></rect></g></svg>
<span class="t b" style="font-size: 7.6px; left: 10.2px; color: rgb(51, 51, 51); letter-spacing: -0.17px; top: 513px;">CHEN, MENG-YI/REN, KE</span>
<span class="t b" style="font-size: 7.6px; left: 10.2px; color: rgb(85, 85, 85); letter-spacing: -0.11px; top: 525.9px;">LI, JIAYOU/ZHANG, JUNHAN</span>
<span class="t b" style="font-size: 8px; color: rgb(51, 51, 51); word-spacing: 1.5px; top: 511.9px; left: 128.1px;">0</span>
<span class="t b" style="font-size: 8px; color: rgb(85, 85, 85); word-spacing: 1.5px; top: 525px; left: 128.1px;">1</span>
<span class="t b red" style="font-size: 8px; top: 511.9px; left: 137.8px;">15</span>
<span class="t b red" style="font-size: 8px; top: 525px; left: 137.8px;">15</span>
<div class="od" style="left:158px;top:523.29px;width:103.1px;height:16.600px;border-radius:2.500px"></div>
<span class="t gr" style="font-size: 8.6px; top: 527.5px; left: 201.2px;">1.89</span>
<span class="t " style="font-size: 5.8px; color: rgb(227, 84, 84); top: 514.5px; left: 207.9px;">1</span>
<div class="od" style="left:264.5px;top:523.29px;width:103.1px;height:16.600px;border-radius:2.500px"></div>
<span class="t gr" style="font-size: 8.6px; top: 527.5px; left: 307.7px;">1.75</span>
<span class="t " style="font-size: 5.8px; color: rgb(227, 84, 84); top: 514.5px; left: 314.4px;">2</span>
<div class="od" style="left:377.3px;top:523.29px;width:103.1px;height:16.600px;border-radius:2.500px"></div>
<span class="t gr" style="font-size: 8.6px; top: 527.5px; left: 420.5px;">2.10</span>
<span class="t " style="font-size: 5.8px; color: rgb(227, 84, 84); top: 514.5px; left: 427.2px;">1</span>
<div class="od" style="left:483.3px;top:523.29px;width:103.1px;height:16.600px;border-radius:2.500px"></div>
<span class="t gr" style="font-size: 8.6px; top: 527.5px; left: 526.5px;">1.60</span>
<span class="t " style="font-size: 5.8px; color: rgb(227, 84, 84); top: 514.5px; left: 533.2px;">2</span>
<svg class="a" style="left:596px;top:523.99px" width="10" height="9.600" viewBox="0 0 9.2 8.8"><path d="M4.600 .9l1.150 2.350 2.600.38-1.880 1.830.44 2.590L4.600 6.830 2.290 8.050l.44-2.590L.85 3.630l2.600-.38z" fill="none" stroke="#e04545" stroke-width=".85" stroke-linejoin="round"></path></svg>
<div class="sep" style="top:541.8px"></div>
<div class="lg" style="top:542.3px;height:21.4px;border-radius:3.500px 4px 5.500px 5.500px"></div>
<svg class="a" style="left:7.1px;top:547.9px" width="10.8" height="7.400" viewBox="0 0 10.8 7.4"><rect width="10.8" height="7.400" fill="#fff"></rect><rect x=".8" y="1.500" width="7.600" height="1" fill="#8fbf8a"></rect><text x=".7" y="6.300" font-family="Liberation Sans, sans-serif" font-weight="bold" font-style="italic" font-size="4.600" fill="#3f8f3a">ITF</text><circle cx="9.300" cy="3.900" r=".9" fill="#d8d838"></circle></svg>
<span class="t b w" style="font-size: 8px; left: 23.4px; -webkit-text-stroke: 0.25px rgb(255, 255, 255); letter-spacing: -0.16px; top: 547.9px;">ITF GIAPPONE</span>
<svg class="a" style="left:596.600px;top:550.8px" width="8" height="5.200" viewBox="0 0 8 5.2"><path d="M.8 .9l3.200 3.200L7.200 .9" fill="none" stroke="#fff" stroke-width="1.500"></path></svg>
<span class="t " style="font-size: 7px; left: 10.2px; color: rgb(106, 106, 106); font-weight: 600; letter-spacing: 0.28px; top: 569.9px;">22/04/25 07:34</span>
<span class="t " style="font-size: 7px; left: 64.4px; color: rgb(106, 106, 106); letter-spacing: -0.49px; top: 569.9px;">3 ° SET</span>
<svg class="a" style="left:138px;top:568.9px" width="11.500" height="8" viewBox="138 243.400 11.500 8"><path d="M142.200 244.100L138.900 247.450l3.300 3.350M144.900 244.100l3.800 3.350-3.700 3.350M141.800 247.500l1.500 1.400M143.900 246l1.600 1.400" fill="none" stroke="#8e8e8e" stroke-width="1"></path></svg>
<span class="t b dk" style="font-size: 8.3px; letter-spacing: -0.25px; top: 570.3px; left: 208px;">TESTA/TESTA (ESCL.RITIRO)</span>
<span class="t b dk" style="font-size: 8.3px; letter-spacing: -0.32px; top: 570.3px; left: 419.1px;">TESTA/TESTA SET (ESCL.RITIRO)</span>
<svg class="a" style="left:596px;top:571.3px" width="10" height="8" viewBox="0 0 10 8"><g fill="#e04545"><rect x="0" y="0" width="2" height="1.500"></rect><rect x="2.600" y="0" width="7.400" height="1.500"></rect><rect x="0" y="2.150" width="2" height="1.500"></rect><rect x="2.600" y="2.150" width="7.400" height="1.500"></rect><rect x="0" y="4.300" width="2" height="1.500"></rect><rect x="2.600" y="4.300" width="7.400" height="1.500"></rect><rect x="0" y="6.450" width="2" height="1.500"></rect><rect x="2.600" y="6.450" width="7.400" height="1.500"></rect></g></svg>
</div>

<!-- ===== mid scrollbar ===== -->
<div class="a" style="left:618px;top:141.5px;width:3px;height:435px;background:#d9dadb"></div>
<div class="a" style="left:618px;top:141.5px;width:3px;height:98.5px;background:#1c1c1c;border-radius:1.5px"></div>

<!-- ===== centre panel ===== -->
<div id="mid">
<div class="hdr" style="left:624.300px;top:94.500px;width:193.700px;height:23.200px"></div>
<span class="t b w" style="left: 628px; font-size: 8.2px; letter-spacing: -0.4px; top: 101.9px;">IN EVIDENZA</span>
<!-- scoreboard -->
<div class="a" style="left:710.200px;top:120.500px;width:21.800px;height:8.800px;border:1px solid #666;border-top:0"></div>
<span class="t" style="font-size: 6.8px; color: rgb(85, 85, 85); -webkit-text-stroke: 0.2px rgb(85, 85, 85); letter-spacing: -0.09px; top: 120.9px; left: 713.3px;">Set 2</span>
<svg class="a" style="left:637.500px;top:128.800px" width="16" height="21.500" viewBox="0 0 16 21.500"><defs><linearGradient id="sh1" x1="0" x2="1"><stop offset="0" stop-color="#cfcfcf"></stop><stop offset=".5" stop-color="#e2e2e2"></stop><stop offset="1" stop-color="#c6c6c6"></stop></linearGradient><linearGradient id="sh2" x1="0" x2="1"><stop offset="0" stop-color="#5e5e5e"></stop><stop offset=".5" stop-color="#777"></stop><stop offset="1" stop-color="#585858"></stop></linearGradient></defs><path id="shp" d="M5.500 .8Q8 0 10.500 .8L14 2.400Q15.300 3.200 15.400 5L15.200 8 12.800 8.600 12.600 7.200Q12.200 11 13 14 13.500 17.500 13.300 20.600 8 21.800 2.700 20.600 2.500 17.500 3 14 3.800 11 3.400 7.200L3.200 8.600 .8 8 .6 5Q.7 3.200 2 2.400z" fill="url(#sh1)"></path><path d="M5.600 .7Q8 2.800 10.400 .7" fill="none" stroke="#aaa" stroke-width=".7"></path></svg>
<span class="t" style="left: 661.9px; font-size: 9.2px; color: rgb(68, 68, 68); font-weight: 600; letter-spacing: -0.07px; top: 134.6px;">RYA</span>
<span class="t" style="left: 702px; font-size: 14.2px; color: rgb(51, 51, 51); -webkit-text-stroke: 0.35px rgb(51, 51, 51); word-spacing: 0.5px; letter-spacing: -0.37px; top: 134.1px;">21 : 22</span>
<svg class="a" style="left:746px;top:138.400px" width="7.400" height="7.400" viewBox="0 0 8 8"><circle cx="4" cy="4" r="3.500" fill="#d5d5d5" stroke="#9a9a9a" stroke-width=".8"></circle><path d="M1 2.800Q3.600 2.500 4.500 4.500T7.400 5M3 .8Q4.800 2 4.500 4.500M4.500 4.500Q3 6 3.300 7.400" fill="none" stroke="#9a9a9a" stroke-width=".6"></path></svg>
<span class="t" style="left: 766.5px; font-size: 9.2px; color: rgb(68, 68, 68); font-weight: 600; letter-spacing: -0.11px; top: 134.6px;">ITA</span>
<svg class="a" style="left:788.700px;top:128.800px" width="16" height="21.500" viewBox="0 0 16 21.500"><path d="M5.500 .8Q8 0 10.500 .8L14 2.400Q15.300 3.200 15.400 5L15.200 8 12.800 8.600 12.600 7.200Q12.200 11 13 14 13.500 17.500 13.300 20.600 8 21.800 2.700 20.600 2.500 17.500 3 14 3.800 11 3.400 7.200L3.200 8.600 .8 8 .6 5Q.7 3.200 2 2.400z" fill="url(#sh2)"></path><path d="M5.600 .7Q8 2.800 10.400 .7" fill="none" stroke="#4a4a4a" stroke-width=".7"></path></svg>
<div class="a" style="left:624.300px;top:158px;width:193.700px;height:1px;background:#7d7d7d"></div>
<!-- momentum chart -->
<span class="t" style="left: 629.9px; font-size: 6.2px; color: rgb(119, 119, 119); letter-spacing: -0.05px; top: 163.4px;">RYA</span>
<div class="a" style="left:705.200px;top:158.500px;width:31.300px;height:12.600px;border:1px solid #9a9a9a;border-top:0;background:#e9ebee"></div>
<span class="t" style="left: 708.8px; font-size: 7px; color: rgb(85, 85, 85); letter-spacing: -0.11px; top: 161.6px;">Set 2</span>
<svg class="a" style="left:729.900px;top:164px" width="4.200" height="2.400" viewBox="0 0 4.200 2.400"><path d="M0 0h4.200L2.100 2.400z" fill="#333"></path></svg>
<span class="t" style="left: 746.6px; font-size: 7px; color: rgb(85, 85, 85); letter-spacing: 0.2px; top: 163.1px;">Al meglio di 5</span>
<svg class="a" style="left:624px;top:160px" width="194" height="66" viewBox="624 160 194 66">
<g stroke="#111" stroke-width="1.250" fill="none"><path d="M662.9 170.9l5 5.200m0-5.200l-5 5.200"></path><path d="M684.2 170.9l5 5.200m0-5.200l-5 5.200"></path><path d="M705.1 170.9l5 5.200m0-5.200l-5 5.200"></path><path d="M736.6 170.9l5 5.200m0-5.200l-5 5.200"></path><path d="M635.1 209.4l5 5.200m0-5.200l-5 5.200"></path><path d="M718.8 209.4l5 5.200m0-5.200l-5 5.200"></path></g>
<g><circle cx="681.7" cy="172.1" r=".95" fill="#111"></circle><path d="M681.7 172.1L678.5 175.1" stroke="#222" stroke-width=".8"></path><path d="M677.1 173.5L677.3 176.6L681.1 176.5L679.1 175.3z" fill="#555" opacity=".85"></path><circle cx="766.1" cy="172.1" r=".95" fill="#111"></circle><path d="M766.1 172.1L762.9 175.1" stroke="#222" stroke-width=".8"></path><path d="M761.5 173.5L761.7 176.6L765.5 176.5L763.5 175.3z" fill="#555" opacity=".85"></path><circle cx="783.6" cy="209.7" r=".95" fill="#111"></circle><path d="M783.6 209.7L780.4 212.7" stroke="#222" stroke-width=".8"></path><path d="M779.0 211.1L779.2 214.2L783.0 214.1L781.0 212.9z" fill="#555" opacity=".85"></path></g>
<path d="M629.600 192.300l2 0 1.800 1.600 1.500-1.500 2 .2 2.300 1 1.800-1.200 3-.2 1.500-1.100 2 .9 2.500.3 4 3.400 2-1.300 3 .3 4.700 4.800 5-3.600 5-3.400 3-.3 1.500-1.200 2 1 3 .2 2-1.100 2 1 3 .1 2-1.100 2.500 1 3 .2 1.500-.9 2 .9 3 .1 4.500 3.600 4 3 2.500-1.800 5.500 4.700 4.500-3.400 2.500 1.600 3.500-2.800 3 2.300 3.500-2.800 3 2 4-2.600 4-2.400 3-.2 3.500-1.600 3-.2 2.500 1.500 2 .3 3 1.700.5-1.800z" fill="#cdd0d0"></path>
<path d="M629.600 192.200H791.300" stroke="#a9abab" stroke-width="1.100"></path>
<path d="M796.900 164v22.600M796.900 226.200V192.500H818" fill="none" stroke="#8f9191" stroke-width=".9"></path>
<g fill="#222"><rect x="803.300" y="175.400" width="1.500" height="3.100"></rect><rect x="805.500" y="173.100" width="1.500" height="5.400"></rect><rect x="807.700" y="171.700" width="1.500" height="6.800"></rect><rect x="809.900" y="173.700" width="1.500" height="4.800"></rect></g>
<rect x="801.600" y="206" width="11.600" height="6.800" rx="1.300" fill="none" stroke="#222" stroke-width=".8"></rect>
<text x="807.400" y="211.500" font-family="Liberation Sans, sans-serif" font-weight="bold" font-size="5.400" fill="#222" text-anchor="middle" letter-spacing="-.2">000</text>
</svg>
<span class="t" style="left: 629.9px; font-size: 6.2px; color: rgb(102, 102, 102); letter-spacing: 0.04px; top: 215.4px;">ITA</span>
<span class="t" style="left: 690.6px; font-size: 6.6px; color: rgb(85, 85, 85); letter-spacing: -0.29px; top: 215.9px;">10:9</span>
<span class="t" style="left: 718px; font-size: 6.6px; color: rgb(85, 85, 85); letter-spacing: -0.55px; top: 215.9px;">12:15</span>
<span class="t" style="left: 759px; font-size: 6.6px; color: rgb(85, 85, 85); letter-spacing: -0.26px; top: 215.9px;">19:20</span>
<div class="a" style="left:624.300px;top:225.800px;width:193.700px;height:1px;background:#888a8a"></div>
<svg class="a" style="left:717px;top:230.300px" width="10" height="5.500" viewBox="0 0 10 5.500"><path d="M.8 .7l4.200 3.900L9.200 .7" fill="none" stroke="#111" stroke-width="1.200"></path></svg>
<!-- market search -->
<div class="a" style="left:624.800px;top:240.300px;width:192.700px;height:22.200px;border-radius:3px 3px 0 0;background:#fff"></div>
<span class="t" style="left: 633px; font-size: 9.6px; color: rgb(155, 155, 155); letter-spacing: 0.41px; top: 245.8px;">Ricerca mercati ed esiti</span>
<div class="hdr" style="left:624.300px;top:262.700px;width:193.700px;height:14.200px"></div>
<span class="t b w" style="left: 628px; font-size: 8px; letter-spacing: -0.39px; top: 265.4px;">TESTA/TESTA SET2 LIVE VOLLEY</span>
<div class="od" style="left:628px;top:281px;width:89.800px;height:15.900px;border-radius:2.500px"></div>
<div class="od" style="left:724.800px;top:281px;width:90px;height:15.900px;border-radius:2.500px"></div>
<span class="t gr" style="left: 631px; font-size: 8.4px; top: 284.8px;">1</span>
<span class="t gr" style="font-size: 8.4px; letter-spacing: 0px; top: 285.2px; left: 698px;">2.00</span>
<span class="t gr" style="left: 727.8px; font-size: 8.4px; top: 284.8px;">2</span>
<span class="t gr" style="font-size: 8.4px; letter-spacing: -0.55px; top: 285.2px; left: 796.4px;">1.52</span>
<div class="hdr" style="left:624.300px;top:300.500px;width:193.700px;height:14.800px"></div>
<span class="t b w" style="left: 628px; font-size: 8.4px; letter-spacing: 0.13px; top: 303.9px;">Testa a Testa match risultato</span>
<div class="od" style="left:628px;top:318.800px;width:89.800px;height:15.900px;border-radius:2.500px"></div>
<div class="od" style="left:724.800px;top:318.800px;width:90px;height:15.900px;border-radius:2.500px"></div>
<span class="t gr" style="left: 631px; font-size: 8.4px; top: 322.6px;">1</span>
<span class="t gr" style="font-size: 8.4px; letter-spacing: -0.55px; top: 323px; left: 699.6px;">1.16</span>
<span class="t gr" style="left: 727.8px; font-size: 8.4px; top: 322.6px;">2</span>
<span class="t gr" style="font-size: 8.4px; letter-spacing: 0.02px; top: 323px; left: 794.7px;">3.65</span>

</div>

<!-- ===== right panel ===== -->
<div id="right">
<div class="a" style="left:824px;top:117.700px;width:194px;height:36.200px;background:#fafafa"></div>
<div class="a" style="left:1015.200px;top:91px;width:2.800px;height:485px;background:#f1f2f5"></div>
<div class="hdr" style="left:824.400px;top:94.500px;width:190.600px;height:23.200px"></div>
<span class="t b w" style="left: 828px; font-size: 8.2px; letter-spacing: -0.26px; top: 101.9px;">RICHIAMA SCOMMESSA</span>
<div class="a" style="left:826.300px;top:126.200px;width:17.700px;height:19.400px;background:#f0eeee;border:1px solid #d2d2d2;border-radius:3px 0 0 3px"></div>
<svg class="a" style="left:830px;top:131px" width="10" height="8" viewBox="0 0 10 8"><g fill="#6f6f6f"><rect x="0" y="0" width="1.100" height="8"></rect><rect x="1.700" y="0" width=".6" height="8"></rect><rect x="2.900" y="0" width="1.200" height="8"></rect><rect x="4.600" y="0" width=".6" height="8"></rect><rect x="5.600" y="0" width="1.100" height="8"></rect><rect x="7.200" y="0" width=".6" height="8"></rect><rect x="8.200" y="0" width=".6" height="8"></rect><rect x="9.200" y="0" width=".8" height="8"></rect></g></svg>
<div class="a" style="left:844px;top:126.200px;width:113.300px;height:19.400px;background:#fff;border-top:1px solid #d2d2d2;border-bottom:1px solid #d2d2d2"></div>
<span class="t" style="left: 851.1px; font-size: 8.4px; color: rgb(155, 155, 155); letter-spacing: 0.26px; top: 132px;">Cod. Accettazione</span>
<div class="a" style="left:957.200px;top:126px;width:56px;height:19.600px;background:#e65a0c;border-radius:0 3px 3px 0"></div>
<span class="t w" style="left: 970.6px; font-size: 8.6px; -webkit-text-stroke: 0.25px rgb(255, 255, 255); letter-spacing: 0.07px; top: 131.8px;">Ricerca</span>
<div class="hdr" style="left:824.400px;top:153.900px;width:190.600px;height:23.100px"></div>
<span class="t b w" style="left: 828px; font-size: 8.2px; letter-spacing: -0.55px; top: 161.4px;">TICKET</span>
<span class="t b w" style="left: 945px; font-size: 8.2px; letter-spacing: -0.25px; top: 161.4px;">N ° DI EVENTI 0</span>
<svg class="a" style="left:1005px;top:161.500px" width="6.800" height="7.400" viewBox="0 0 6.800 7.400"><path d="M2.300 0h2.200l.4.700h1.900v1H0v-1h1.900zM.5 2.200h5.800l-.4 4.600c0 .3-.3.600-.6.600H1.500c-.3 0-.6-.3-.6-.6z" fill="#fff"></path><path d="M2.300 3v3.400M3.400 3v3.400M4.500 3v3.400" stroke="#e65a0c" stroke-width=".45"></path></svg>
<span class="t" style="left: 852.9px; font-size: 9.6px; color: rgb(224, 58, 62); letter-spacing: 0.39px; top: 184.3px;">Inserire gli eventi nel coupon</span>
<div class="a" style="left:824.400px;top:204px;width:190.600px;height:334px;background:#000"></div>
<svg class="a" style="left:824.400px;top:227px" width="190.600" height="311" viewBox="824.400 227 190.600 311"><defs><filter id="bl" x="-5%" y="-5%" width="110%" height="110%"><feGaussianBlur stdDeviation="1.300"></feGaussianBlur></filter><filter id="bl15" x="-10%" y="-10%" width="120%" height="120%"><feGaussianBlur stdDeviation="1.900"></feGaussianBlur></filter><filter id="bl2" x="-20%" y="-20%" width="140%" height="140%"><feGaussianBlur stdDeviation="2.200"></feGaussianBlur></filter><linearGradient id="reel" x1="0" y1="0" x2="0" y2="1"><stop offset="0" stop-color="#46300e"></stop><stop offset=".3" stop-color="#523814"></stop><stop offset=".65" stop-color="#33220b"></stop><stop offset="1" stop-color="#150e05"></stop></linearGradient><linearGradient id="fade" x1="0" y1="0" x2="0" y2="1"><stop offset="0" stop-color="#000" stop-opacity="0"></stop><stop offset="1" stop-color="#04030a" stop-opacity=".95"></stop></linearGradient></defs><rect x="824.400" y="227" width="190.600" height="311" fill="#020205"></rect><g opacity=".78"><g filter="url(#bl15)"><rect x="939" y="230.300" width="69" height="3" fill="#1c2a10"></rect><rect x="828.800" y="238.600" width="182.600" height="181" rx="3" fill="#06050c" stroke="#090948" stroke-width="4.600"></rect><rect x="834" y="262.500" width="172" height="3.500" fill="#07073a"></rect><rect x="856" y="264" width="5" height="152" fill="#07072e"></rect><rect x="981" y="264" width="5" height="152" fill="#07072e"></rect></g><g filter="url(#bl2)"><circle cx="841.5" cy="252.300" r="7" fill="#2a0c0a"></circle><circle cx="868.8" cy="252.300" r="7" fill="#0a1440"></circle><circle cx="894.2" cy="252.300" r="6.5" fill="#2e0c14"></circle><circle cx="947" cy="252.300" r="8.5" fill="#3a1c08"></circle><circle cx="973.3" cy="252.300" r="7" fill="#0a1444"></circle><circle cx="998.7" cy="252.300" r="7" fill="#2c2a0c"></circle><rect x="911" y="247.500" width="19" height="9" rx="2" fill="#1a2050"></rect><circle cx="841.500" cy="275" r="7" fill="#143a1c"></circle><circle cx="997.700" cy="275" r="7" fill="#143a1c"></circle><circle cx="841.500" cy="304" r="7" fill="#3c1c0a"></circle><circle cx="997.700" cy="304" r="7" fill="#3a0c16"></circle><circle cx="841.500" cy="328.5" r="7" fill="#0c1646"></circle><circle cx="997.700" cy="328.5" r="7" fill="#123c1c"></circle><circle cx="841.500" cy="354" r="7" fill="#2a1408"></circle><circle cx="997.700" cy="354" r="7" fill="#3a0c10"></circle><circle cx="841.500" cy="380" r="7" fill="#10301a"></circle><circle cx="997.700" cy="380" r="7" fill="#2a2408"></circle></g><g filter="url(#bl15)"><rect x="901" y="276.300" width="40" height="120" fill="url(#reel)"></rect><rect x="864" y="285.500" width="33" height="111" fill="url(#reel)"></rect><rect x="945" y="285.500" width="33.200" height="111" fill="url(#reel)"></rect><rect x="873" y="292" width="2.200" height="40" fill="#2e1d08" opacity=".7"></rect><rect x="884" y="292" width="2.200" height="40" fill="#2e1d08" opacity=".7"></rect><rect x="911" y="292" width="2.200" height="40" fill="#2e1d08" opacity=".7"></rect><rect x="921" y="292" width="2.200" height="40" fill="#2e1d08" opacity=".7"></rect><rect x="931" y="292" width="2.200" height="40" fill="#2e1d08" opacity=".7"></rect><rect x="954" y="292" width="2.200" height="40" fill="#2e1d08" opacity=".7"></rect><rect x="966" y="292" width="2.200" height="40" fill="#2e1d08" opacity=".7"></rect><rect x="881" y="324" width="7" height="26" rx="2.500" fill="#7a5c30"></rect><rect x="870" y="330" width="5" height="20" rx="2.500" fill="#7a5c30"></rect><rect x="924.5" y="323" width="8" height="28" rx="2.500" fill="#7a5c30"></rect><rect x="911.5" y="329" width="5.5" height="20" rx="2.500" fill="#7a5c30"></rect><rect x="961" y="324" width="7" height="26" rx="2.500" fill="#7a5c30"></rect><rect x="951.5" y="330" width="5" height="20" rx="2.500" fill="#7a5c30"></rect></g><rect x="860" y="336" width="124" height="64" fill="url(#fade)"></rect><g filter="url(#bl2)"><circle cx="848" cy="405.500" r="7.500" fill="#2a2408"></circle><circle cx="872" cy="405.500" r="7.500" fill="#0e2a12"></circle><circle cx="898" cy="405.500" r="7.500" fill="#3a1c06"></circle><circle cx="927" cy="405.500" r="7.500" fill="#0e2e14"></circle><circle cx="953" cy="405.500" r="7.500" fill="#3a100c"></circle><circle cx="978" cy="405.500" r="7.500" fill="#0c1230"></circle><circle cx="1000" cy="405.500" r="7.500" fill="#2a1206"></circle></g></g><g filter="url(#bl15)"><rect x="826" y="420.500" width="188.500" height="52" fill="#0e1580"></rect><rect x="826" y="421" width="188.500" height="3.200" fill="#2434cc"></rect><rect x="826" y="468.500" width="188.500" height="3" fill="#1622a8"></rect><rect x="831.5" y="427" width="19" height="40" fill="#1420a0"></rect><rect x="834" y="429.500" width="14" height="4" rx="1" fill="#182a8c"></rect><rect x="833.5" y="459.500" width="15" height="6" rx="1.500" fill="#2448c4"></rect><rect x="855.2" y="427" width="19" height="40" fill="#1420a0"></rect><rect x="857.7" y="429.500" width="14" height="4" rx="1" fill="#182a8c"></rect><rect x="857.2" y="459.500" width="15" height="6" rx="1.500" fill="#2448c4"></rect><rect x="877.2" y="427" width="19" height="40" fill="#1420a0"></rect><rect x="879.7" y="429.500" width="14" height="4" rx="1" fill="#182a8c"></rect><rect x="879.2" y="459.500" width="15" height="6" rx="1.500" fill="#2448c4"></rect><rect x="900.2" y="427" width="19" height="40" fill="#1420a0"></rect><rect x="902.7" y="429.500" width="14" height="4" rx="1" fill="#182a8c"></rect><rect x="902.2" y="459.500" width="15" height="6" rx="1.500" fill="#2448c4"></rect><rect x="922.5" y="427" width="19" height="40" fill="#1420a0"></rect><rect x="925" y="429.500" width="14" height="4" rx="1" fill="#182a8c"></rect><rect x="924.5" y="459.500" width="15" height="6" rx="1.500" fill="#2448c4"></rect><rect x="945.2" y="427" width="19" height="40" fill="#1420a0"></rect><rect x="947.7" y="429.500" width="14" height="4" rx="1" fill="#182a8c"></rect><rect x="947.2" y="459.500" width="15" height="6" rx="1.500" fill="#2448c4"></rect><rect x="967.5" y="427" width="19" height="40" fill="#1420a0"></rect><rect x="970" y="429.500" width="14" height="4" rx="1" fill="#182a8c"></rect><rect x="969.5" y="459.500" width="15" height="6" rx="1.500" fill="#2448c4"></rect><rect x="990.2" y="427" width="19" height="40" fill="#1420a0"></rect><rect x="992.7" y="429.500" width="14" height="4" rx="1" fill="#182a8c"></rect><rect x="992.2" y="459.500" width="15" height="6" rx="1.500" fill="#2448c4"></rect><rect x="851.5" y="426" width="2.600" height="43" fill="#0a0f60"></rect><rect x="874.4000000000001" y="426" width="2.600" height="43" fill="#0a0f60"></rect><rect x="896.9000000000001" y="426" width="2.600" height="43" fill="#0a0f60"></rect><rect x="919.5" y="426" width="2.600" height="43" fill="#0a0f60"></rect><rect x="942.0" y="426" width="2.600" height="43" fill="#0a0f60"></rect><rect x="964.5" y="426" width="2.600" height="43" fill="#0a0f60"></rect><rect x="987.0" y="426" width="2.600" height="43" fill="#0a0f60"></rect></g><g filter="url(#bl)"><circle cx="841" cy="446.500" r="8" fill="#0a0c50" opacity=".7"></circle><circle cx="864.7" cy="446.500" r="8" fill="#0a0c50" opacity=".7"></circle><circle cx="886.7" cy="446.500" r="8" fill="#0a0c50" opacity=".7"></circle><circle cx="909.7" cy="446.500" r="8" fill="#0a0c50" opacity=".7"></circle><circle cx="932" cy="446.500" r="8" fill="#0a0c50" opacity=".7"></circle><circle cx="954.7" cy="446.500" r="8" fill="#0a0c50" opacity=".7"></circle><circle cx="977" cy="446.500" r="8" fill="#0a0c50" opacity=".7"></circle><circle cx="999.7" cy="446.500" r="8" fill="#0a0c50" opacity=".7"></circle><path d="M835.500 441l5 -2.500 7 5 0 5.500-8 1.500-4.500-4z" fill="#c050e0"></path><path d="M837 442l4-1 4 4-6 1z" fill="#e8a0f0"></path><path d="M860 439.500h8l-1.500 5 3 3.500-2.500 5.500h-7.500l1.500-5.500-3-3z" fill="#d8141a"></path><rect x="859" y="450" width="10" height="3.500" fill="#8a0c10"></rect><circle cx="886.700" cy="447" r="6" fill="#e88a18"></circle><circle cx="886.700" cy="445.500" r="3.200" fill="#f6e030"></circle><circle cx="886.700" cy="452" r="3" fill="#b84c10"></circle><path d="M909.700 438.500l7 12.500q-7 3.500-14 0z" fill="#38c040"></path><path d="M909.700 442l3 6h-6z" fill="#8af088"></path><path d="M927 441l6-1.500 4.500 6-3 7-6-1.500-3.500-5.500z" fill="#c01888"></path><circle cx="931" cy="445" r="2.200" fill="#f050c0"></circle><path d="M930 450l6 4" stroke="#6a1470" stroke-width="3"></path><circle cx="954.700" cy="447" r="6.800" fill="#f04a10"></circle><circle cx="953.500" cy="445" r="3.400" fill="#ffb030"></circle><circle cx="956" cy="451" r="3" fill="#d01810"></circle><circle cx="977" cy="445" r="5.600" fill="#1488f0"></circle><path d="M972.500 448h9l-2 7h-5z" fill="#0c50c0"></path><rect x="993.500" y="440" width="12.500" height="12.500" rx="3.500" fill="#28c860"></rect><rect x="996.500" y="442.500" width="6.500" height="6.500" rx="2" fill="#90f080"></rect></g><g filter="url(#bl15)"><rect x="826" y="472.500" width="188.500" height="54" fill="#0a0a46"></rect><rect x="832" y="475.800" width="61.500" height="12.400" fill="#000"></rect><rect x="860" y="479" width="14" height="4.500" fill="#2a2a2a"></rect><rect x="897" y="476.800" width="40.7" height="8.800" rx="1.500" fill="#b254d0"></rect><rect x="898" y="483.500" width="38.7" height="2.600" fill="#8a3490"></rect><rect x="897" y="489.500" width="40.7" height="9" fill="#15156a"></rect><rect x="944.7" y="476.800" width="28.8" height="8.800" rx="1.500" fill="#b254d0"></rect><rect x="945.7" y="483.500" width="26.8" height="2.600" fill="#8a3490"></rect><rect x="944.7" y="489.500" width="28.8" height="9" fill="#15156a"></rect><rect x="979.7" y="476.800" width="30" height="8.800" rx="1.500" fill="#b254d0"></rect><rect x="980.7" y="483.500" width="28" height="2.600" fill="#8a3490"></rect><rect x="979.7" y="489.500" width="30" height="9" fill="#15156a"></rect><rect x="834.7" y="492" width="22.500" height="7" rx="1.500" fill="#8a2ec8"></rect><rect x="867.2" y="492" width="22.500" height="7" rx="1.500" fill="#8a2ec8"></rect><rect x="829.400" y="510.200" width="80" height="10" rx="1.500" fill="#1230ac"></rect><rect x="932.500" y="510.200" width="81.500" height="10" rx="1.500" fill="#1230ac"></rect><rect x="915" y="508.500" width="12.500" height="13" rx="2" fill="#2a4a8a"></rect><rect x="918.500" y="511.500" width="5.500" height="7" fill="#3a7a8a"></rect><rect x="826" y="526" width="188.500" height="12" fill="#010103"></rect><rect x="838.700" y="532" width="29" height="2.200" fill="#1a2220"></rect><rect x="913.700" y="532" width="14" height="2.400" fill="#4a4a4a"></rect><rect x="955" y="532" width="46" height="2.200" fill="#161c1c"></rect></g><text x="919.900" y="368.100" text-anchor="middle" font-family="Liberation Sans, sans-serif" font-weight="bold" font-size="19.400" fill="#fff" textLength="80.400" lengthAdjust="spacingAndGlyphs">CLICCA</text><text x="919.900" y="388.100" text-anchor="middle" font-family="Liberation Sans, sans-serif" font-weight="bold" font-size="19.400" fill="#fff" textLength="145" lengthAdjust="spacingAndGlyphs">PER GIOCARE!</text></svg>
<div class="hdr" style="left:824.400px;top:203.900px;width:190.600px;height:23.300px"></div>
<span class="t b w" style="left: 828px; font-size: 8.2px; letter-spacing: -0.31px; top: 210.8px;">INSTANTGAMES</span>
<div class="a" style="left:924.300px;top:209px;width:87.300px;height:12.800px;background:#fff;border:1px solid #7a7a7a"></div>
<span class="t" style="left: 927px; font-size: 8.6px; color: rgb(34, 34, 34); letter-spacing: 0.19px; top: 210.5px;">Instant Space Bar</span>
<svg class="a" style="left:1003.500px;top:213.600px" width="5.600" height="3.600" viewBox="0 0 5.600 3.600"><path d="M.5 .5l2.300 2.300L5.100 .5" fill="none" stroke="#444" stroke-width=".9"></path></svg>
<div class="a" style="left:824px;top:538px;width:194px;height:38px;background:#f4f5f7"></div>
<div class="a" style="left:824.400px;top:565px;width:190.600px;height:11px;background:#fafafa"></div>
<div class="hdr" style="left:824.400px;top:542.300px;width:190.600px;height:22.800px"></div>
<span class="t b w" style="left: 828px; font-size: 8.2px; letter-spacing: -0.37px; top: 549.3px;">ULTIME VINCITE</span>
<span class="t" style="left: 828px; font-size: 8px; color: rgb(68, 68, 68); letter-spacing: -0.55px; top: 572.4px;">E. D.</span>
<span class="t" style="font-size: 8px; color: rgb(68, 68, 68); letter-spacing: 0.48px; top: 572.4px; left: 977px;">20/04/25</span>
</div>

<!-- ===== page scrollbars ===== -->
<div class="a" style="left:1018px;top:91px;width:3.5px;height:485px;background:#cbcccc"></div>
<div class="a" style="left:1018px;top:91px;width:3.5px;height:387px;background:#222"></div>
<div class="a" style="left:1021.5px;top:0;width:2.5px;height:576px;background:#222"></div>
<div class="a" style="left:1021.5px;top:0;width:2.5px;height:23px;background:#000"></div>

</div>


</body></html>
